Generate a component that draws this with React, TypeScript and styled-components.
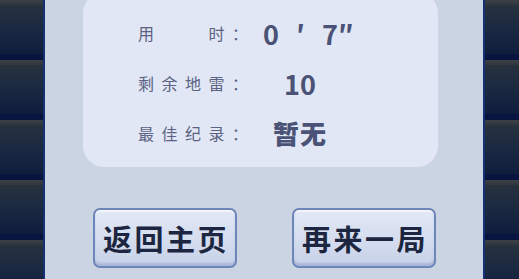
import React from "react";
import styled, { createGlobalStyle } from "styled-components";

const GlobalStyle = createGlobalStyle`
  html, body {
    margin: 0;
    padding: 0;
    overflow: hidden;
    background: #0b1a3a;
  }
`;

const CJK = `"Noto Sans CJK SC", "Noto Sans", sans-serif`;

const Screen = styled.div`
  display: flex;
  width: 519px;
  height: 279px;
  overflow: hidden;
  font-family: ${CJK};
`;

const TileColumn = styled.div<{ w: number }>`
  display: flex;
  flex-direction: column;
  width: ${(p) => p.w}px;
  flex-shrink: 0;
`;

const Tile = styled.div`
  height: 60px;
  flex-shrink: 0;
  display: flex;
  flex-direction: column;
`;

const TileTop = styled.div`
  height: 5px;
  background: linear-gradient(180deg, #3d4146 0%, #30363d 100%);
`;

const TileBody = styled.div`
  flex: 1;
  background: linear-gradient(180deg, #27323e 0%, #1a2841 50%, #0f1d3d 100%);
`;

const TileBottom = styled.div`
  height: 6px;
  background: #06143f;
`;

const Edge = styled.div`
  width: 2px;
  flex-shrink: 0;
  background: #163173;
`;

const Panel = styled.div`
  width: 438px;
  flex-shrink: 0;
  background: #cbd4e3;
  display: flex;
  flex-direction: column;
`;

const Card = styled.div`
  margin: -8px 0 0 38px;
  width: 355px;
  height: 175px;
  box-sizing: border-box;
  padding: 16px 0 0 55px;
  background: #e1e7f4;
  border-radius: 21px;
`;

const Row = styled.div`
  display: grid;
  grid-template-columns: 125px auto;
  align-items: center;
  height: 50px;
`;

const Label = styled.span`
  font-size: 16px;
  letter-spacing: 7.5px;
  color: #5b6283;
  white-space: pre;
`;

const Value = styled.span<{ indent: number; spread?: number }>`
  padding-left: ${(p) => p.indent}px;
  font-size: 27px;
  font-weight: 700;
  color: #4a5276;
  white-space: pre;
  line-height: 1;
  word-spacing: ${(p) => p.spread ?? 0}px;
`;

const Word = styled(Value)`
  font-size: 26px;
  font-weight: 900;
  letter-spacing: 1px;
`;

const ButtonRow = styled.div`
  display: flex;
  justify-content: center;
  gap: 55px;
  margin-top: 41px;
`;

const ActionButton = styled.button`
  width: 144px;
  height: 60px;
  box-sizing: border-box;
  border: 2px solid #6e85b9;
  border-radius: 7px;
  background: linear-gradient(180deg, #e2e8f5 0%, #d3dcee 60%, #c6d1e8 100%);
  box-shadow: inset 0 -3px 2px rgba(120, 140, 190, 0.35),
    inset 0 2px 1px rgba(255, 255, 255, 0.6);
  font-family: ${CJK};
  font-size: 29px;
  font-weight: 700;
  letter-spacing: 2.5px;
  color: #1d2640;
  padding: 0 0 0 3px;
  cursor: pointer;
`;

const tiles = [0, 1, 2, 3, 4];

const Tiles = ({ w }: { w: number }) => (
  <TileColumn w={w}>
    {tiles.map((t) => (
      <Tile key={t}>
        <TileTop />
        <TileBody />
        <TileBottom />
      </Tile>
    ))}
  </TileColumn>
);

const stats = [
  { label: "用\u3000\u3000时：", value: "0 ′ 7″", indent: 0, spread: 11, word: false },
  { label: "剩余地雷：", value: "10", indent: 21, spread: 0, word: false },
  { label: "最佳纪录：", value: "暂无", indent: 10, spread: 0, word: true },
];

export default function App() {
  return (
    <>
      <GlobalStyle />
      <Screen>
        <Tiles w={43} />
        <Edge />
        <Panel>
          <Card>
            {stats.map((s) => (
              <Row key={s.label}>
                <Label>{s.label}</Label>
                {s.word ? (
                  <Word indent={s.indent}>{s.value}</Word>
                ) : (
                  <Value indent={s.indent} spread={s.spread}>
                    {s.value}
                  </Value>
                )}
              </Row>
            ))}
          </Card>
          <ButtonRow>
            <ActionButton type="button">返回主页</ActionButton>
            <ActionButton type="button">再来一局</ActionButton>
          </ButtonRow>
        </Panel>
        <Edge />
        <Tiles w={34} />
      </Screen>
    </>
  );
}
